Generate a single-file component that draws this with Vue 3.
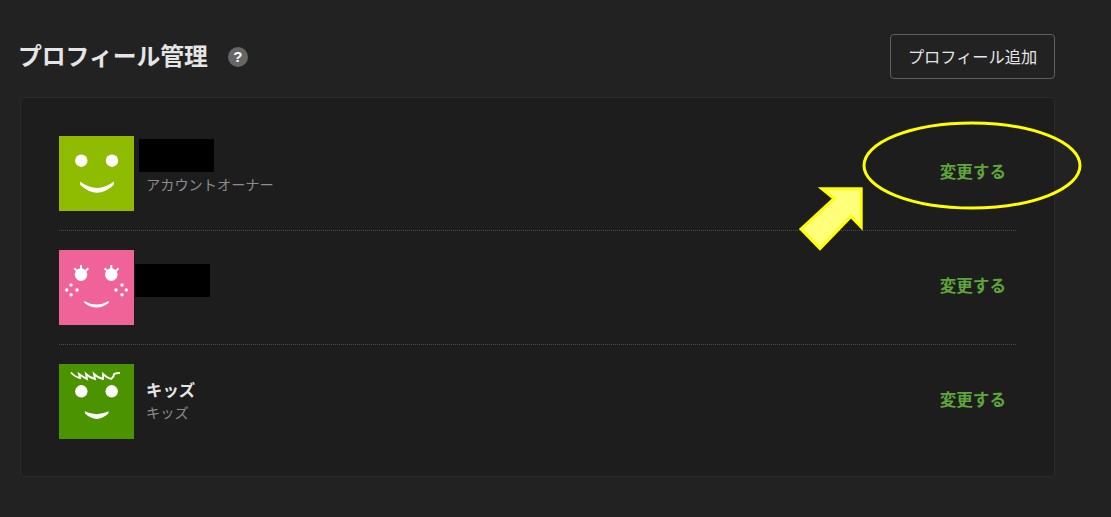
<template>
  <div class="page">
    <div class="header">
      <div class="title-wrap">
        <h1 class="title">プロフィール管理</h1>
        <span class="help">?</span>
      </div>
      <button class="add-btn">プロフィール追加</button>
    </div>

    <div class="card">
      <div v-for="p in profiles" :key="p.id" class="row">
        <svg class="avatar" viewBox="0 0 75 75" :style="{ background: p.color }">
          <g v-if="p.id === 'owner'" fill="#fff">
            <circle cx="22.3" cy="24.7" r="6.2" />
            <circle cx="53" cy="24.7" r="6.2" />
            <path d="M21 45.6Q38 58.400 55 45.6l-.3 3.400Q38 64.400 21.300 49z" />
          </g>
          <g v-else-if="p.id === 'second'" fill="#fff">
            <circle cx="22" cy="24.600" r="6.300" />
            <circle cx="52.300" cy="24.600" r="6.300" />
            <path d="M22 15v6M15.300 18.300l4 4M29.300 18.300l-4 4M52.300 15v6M45.600 18.300l4 4M59.600 18.300l-4 4" stroke="#fff" stroke-width="2" fill="none" />
            <circle v-for="(f, i) in freckles" :key="i" :cx="f[0]" :cy="f[1]" r="1.700" />
            <path d="M25 51Q37.500 58 50 51l-.5 2Q37.500 62 25.500 53z" />
          </g>
          <g v-else fill="#fff">
            <circle cx="22.300" cy="27.300" r="6.200" />
            <circle cx="52.700" cy="27.300" r="6.200" />
            <path d="M12 8.500Q16 13 21 14L20 10Q24 13 28 15L27 10Q31 14 36 15L35 10Q39 14 44 15L44 10Q48 14 52 15Q55 13 55 10Q57 9 61 9" stroke="#fff" stroke-width="1.800" fill="none" />
            <path d="M25.700 47.300Q37.700 53 49.700 47.300l-.5 2.500Q37.700 60 26.200 49.800z" />
          </g>
        </svg>
        <div class="info">
          <div v-if="p.name !== null" class="name">{{ p.name }}</div>
          <div v-if="p.sub" class="sub">{{ p.sub }}</div>
        </div>
        <span v-if="p.redact" class="redact" :class="p.redact"></span>
        <a class="change">変更する</a>
      </div>
    </div>

    <svg class="marks" viewBox="0 0 1111 517">
      <ellipse cx="972" cy="165.500" rx="108" ry="42.500" fill="none" stroke="#ffff00" stroke-width="3" />
      <path d="M822 188.800H861.200V227L851 216.500L820 248.500L801 229L834 198.500Z" fill="#ffff7a" stroke="#ffff00" stroke-width="3" />
    </svg>
  </div>
</template>

<script setup>
const freckles = [
  [12, 35], [7.7, 40], [18, 40], [12, 44.7],
  [63, 35], [57, 40], [67.3, 40], [63, 44.7]
]

const profiles = [
  { id: 'owner', color: '#8fbb00', name: '', sub: 'アカウントオーナー', redact: 'redact-a' },
  { id: 'second', color: '#ef6399', name: null, sub: '', redact: 'redact-b' },
  { id: 'kids', color: '#4b9400', name: 'キッズ', sub: 'キッズ', redact: '' }
]
</script>

<style>
html, body {
  margin: 0;
  background: #222222;
}
</style>

<style scoped>
.page {
  position: relative;
  box-sizing: border-box;
  width: 1111px;
  height: 517px;
  padding: 34px 56px 0 20px;
  font-family: "Noto Sans CJK JP", "Noto Sans", sans-serif;
  overflow: hidden;
}

.header {
  display: flex;
  justify-content: space-between;
  align-items: center;
  height: 45px;
  margin-bottom: 18px;
}

.title-wrap {
  display: flex;
  align-items: center;
  margin-left: -2px;
}

.title {
  margin: -4px 0 0;
  font-size: 23.800px;
  font-weight: 700;
  color: #e5e5e5;
  line-height: 45px;
}

.help {
  width: 20px;
  height: 20px;
  margin-left: 20px;
  margin-top: 1px;
  border-radius: 50%;
  background: #666666;
  color: #ffffff;
  font-family: "Liberation Sans", sans-serif;
  font-size: 15px;
  font-weight: 700;
  line-height: 20px;
  text-align: center;
}

.add-btn {
  box-sizing: border-box;
  width: 165px;
  height: 45px;
  padding: 0 0 2px;
  background: transparent;
  border: 1px solid #5f5f5f;
  border-radius: 4px;
  color: #e5e5e5;
  font-family: inherit;
  font-size: 16.200px;
}

.card {
  box-sizing: border-box;
  height: 380px;
  padding: 19px 38px;
  background: #1d1d1d;
  border: 1px solid #2b2b2b;
  border-radius: 4px;
}

.row {
  position: relative;
  display: flex;
  align-items: center;
  height: 113px;
  border-bottom: 1px dotted #4a4a4a;
}

.row:last-child {
  border-bottom: none;
}

.avatar {
  flex: none;
  width: 75px;
  height: 75px;
}

.info {
  flex: 1;
  margin-left: 12px;
  margin-top: -2px;
}

.name {
  min-height: 23px;
  font-size: 16.400px;
  font-weight: 700;
  line-height: 23px;
  color: #e5e5e5;
}

.sub {
  font-size: 14.200px;
  line-height: 23px;
  color: #8c8c8c;
}

.redact {
  position: absolute;
  width: 75px;
  height: 33px;
  background: #000000;
}

.redact-a {
  left: 80px;
  top: 22px;
}

.redact-b {
  left: 76px;
  top: 33px;
}

.change {
  margin-right: 10px;
  margin-top: -5px;
  font-size: 16.600px;
  font-weight: 700;
  color: #5fa53b;
}

.marks {
  position: absolute;
  left: 0;
  top: 0;
  width: 1111px;
  height: 517px;
  pointer-events: none;
}
</style>
